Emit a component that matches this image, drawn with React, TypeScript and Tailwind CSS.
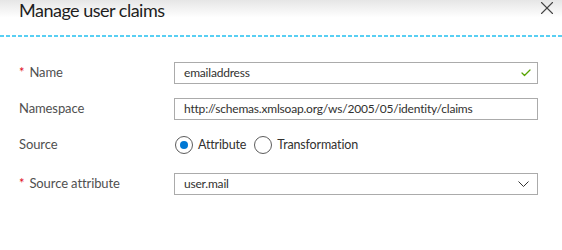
import { Check, X } from "lucide-react";

type RowProps = {
  label: string;
  required?: boolean;
  className?: string;
  children: React.ReactNode;
};

function Row({ label, required, className = "", children }: RowProps) {
  return (
    <div className={`flex items-center ${className}`}>
      <div className="flex w-[174px] shrink-0 items-center pl-[19px] text-[13px] tracking-[-0.1px] text-[#505050]">
        {required && <span className="mr-[5px] text-[#e00b1c]">*</span>}
        {label}
      </div>
      {children}
    </div>
  );
}

function Radio({ label, checked }: { label: string; checked?: boolean }) {
  return (
    <label className="flex items-center gap-[5px]">
      <span className="grid h-[18px] w-[18px] place-items-center rounded-full border border-[#5c5c5c] bg-white">
        {checked && <span className="h-[8px] w-[8px] rounded-full bg-[#0078d4]" />}
      </span>
      <span className="text-[12.5px] tracking-[-0.15px] text-[#323130]">{label}</span>
    </label>
  );
}

export default function App() {
  return (
    <div className="h-[250px] w-[562px] overflow-hidden bg-white font-['Lato',sans-serif]">
      <header className="flex h-[35px] items-start justify-between bg-gradient-to-b from-[#e6e6e6] via-white to-white pl-[19px] pr-[4px]">
        <h1 className="mt-[-2px] text-[18px] leading-[24px] tracking-[-0.5px] text-[#1e1e1e]">Manage user claims</h1>
        <X className="mt-[-3px] h-[22px] w-[22px] text-[#444]" strokeWidth={1.2} />
      </header>
      <svg className="block h-[2px] w-[562px]" viewBox="0 0 562 2">
        <line x1="0" y1="1" x2="562" y2="1" stroke="#23c0f0" strokeWidth="1.4" strokeDasharray="4 2" />
      </svg>

      <Row label="Name" required className="mt-[25px]">
        <div className="flex h-[22px] w-[364px] items-center justify-between border border-[#ababab] pl-[9px] pr-[5px] text-[12px] tracking-[-0.2px] text-[#323130]">
          <span>emailaddress</span>
          <Check className="h-[12px] w-[12px] text-[#57a300]" strokeWidth={2.5} />
        </div>
      </Row>

      <Row label="Namespace" className="mt-[14px]">
        <div className="flex h-[22px] w-[364px] items-center border border-[#ababab] pl-[9px] text-[12px] tracking-[-0.2px] text-[#323130]">
          http://schemas.xmlsoap.org/ws/2005/05/identity/claims
        </div>
      </Row>

      <Row label="Source" className="mt-[14px]">
        <div className="flex h-[22px] items-center gap-[8px] pl-[1px]">
          <Radio label="Attribute" checked />
          <Radio label="Transformation" />
        </div>
      </Row>

      <Row label="Source attribute" required className="mt-[17px]">
        <div className="flex h-[22px] w-[364px] items-center justify-between border border-[#ababab] pl-[9px] pr-[8px] text-[12px] tracking-[-0.2px] text-[#323130]">
          <span>user.mail</span>
          <svg width="11" height="6" viewBox="0 0 11 6" fill="none">
            <polyline points="0.5,0.5 5.5,5.5 10.5,0.5" stroke="#333" strokeWidth="1" />
          </svg>
        </div>
      </Row>
    </div>
  );
}
